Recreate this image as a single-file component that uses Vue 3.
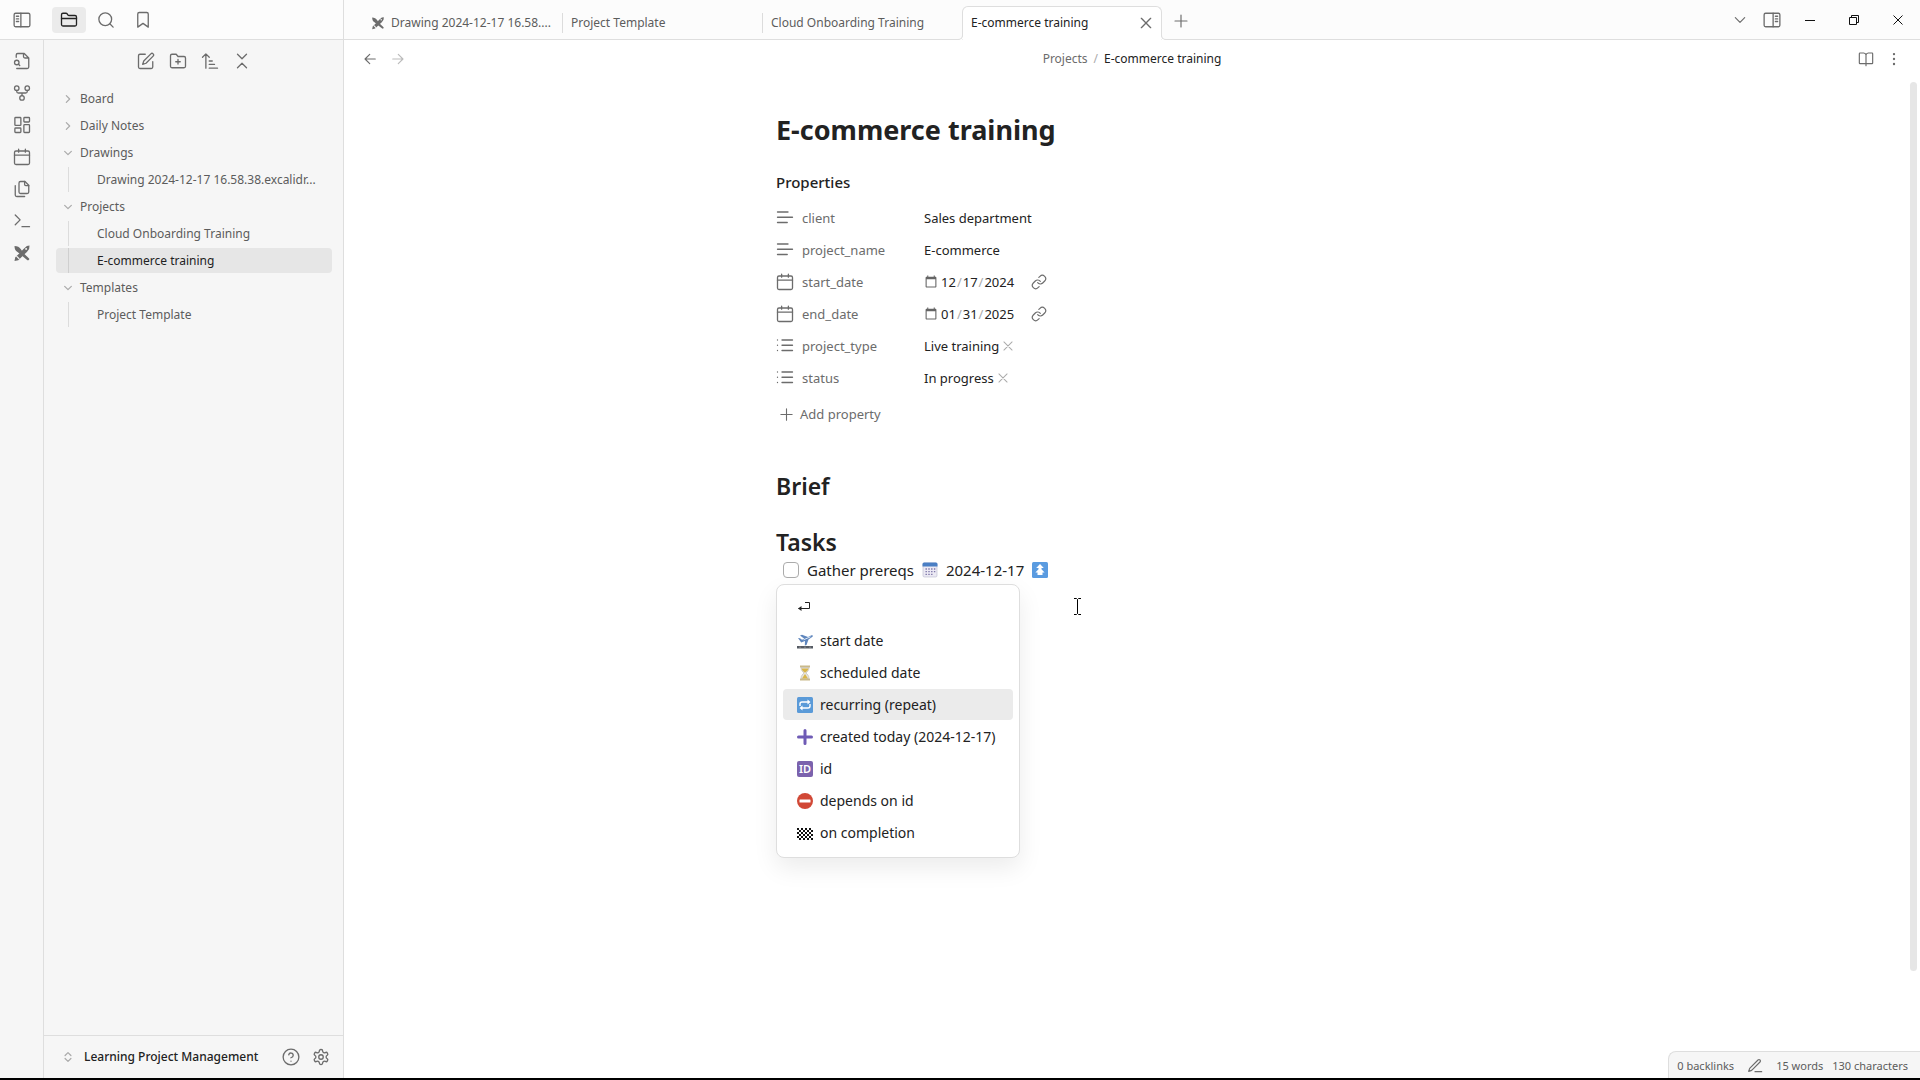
<script setup>
import { ref } from 'vue'

const icons = {
  panelLeft: '<rect x="1.5" y="3" width="21" height="18" rx="2"/><path d="M10.5 3v18M4.5 7h3M4.5 10.500h3M4.500 14h3"/>',
  panelRight: '<rect x="1.5" y="3" width="21" height="18" rx="2"/><path d="M13.5 3v18M16.500 7h3M16.500 10.500h3M16.500 14h3"/>',
  folder: '<path d="M20 20a2 2 0 0 0 2-2V8a2 2 0 0 0-2-2h-7.900a2 2 0 0 1-1.690-.9L9.600 3.900A2 2 0 0 0 7.930 3H4a2 2 0 0 0-2 2v13a2 2 0 0 0 2 2Z"/><path d="M2 10h20"/>',
  search: '<circle cx="11" cy="11" r="8.500"/><path d="m21.500 21.500-4.400-4.400"/>',
  bookmark: '<path d="m19 21.500-7-5-7 5V4a2 2 0 0 1 2-2h10a2 2 0 0 1 2 2z"/>',
  fileSearch: '<path d="M14 2v4a2 2 0 0 0 2 2h5M4.300 7V4a2 2 0 0 1 2-2H15l6 6v12a2 2 0 0 1-2 2H5"/><circle cx="5" cy="14" r="3"/><path d="m9 18-1.700-1.700"/>',
  graph: '<circle cx="12" cy="18.500" r="3"/><circle cx="5" cy="5.500" r="3"/><circle cx="19" cy="5.500" r="3"/><path d="M19 8.500v1.500a2 2 0 0 1-2 2H7a2 2 0 0 1-2-2V8.500M12 12v3.500"/>',
  dashboard: '<rect x="2.500" y="2" width="8" height="10.500" rx="1"/><rect x="14.500" y="2" width="7.500" height="6" rx="1"/><rect x="14.500" y="11.500" width="7.500" height="10.500" rx="1"/><rect x="2.500" y="16" width="8" height="6" rx="1"/>',
  calendar: '<rect x="2" y="4" width="20" height="18" rx="2"/><path d="M7.500 1.500v4M16.500 1.500v4M2 9.500h20"/>',
  copy: '<path d="M16 2H10a2 2 0 0 0-2 2v12a2 2 0 0 0 2 2h9a2 2 0 0 0 2-2V7z"/><path d="M15.500 2v4a1.500 1.500 0 0 0 1.500 1.500h4M3 7.500V20a2 2 0 0 0 2 2h10.500"/>',
  terminal: '<path d="m3 17 6.500-6.500L3 4M12 19.500h10"/>',
  excalidraw: '<g fill="currentColor" stroke="none"><path d="M2 2.500c4 .2 6.500 1.500 8.300 4.200l2 2.800-3.300 3.600-3-2.300C3.300 9 2 6.500 2 2.500z"/><path d="m14.800 13 6.700 6.200c.8 1.600-.8 3-2.300 2.300L12 15.800z"/><path d="M18.500 2.500 22 2l-.5 4.500-3 4.200-6 5.500-5.500 5.300L2 22.500l1-4.800L9 12l5-5.500z"/></g><path d="m5 16.500 3 3" stroke="#f6f6f6"/><circle cx="17.500" cy="6.500" r="1.300" fill="#f6f6f6" stroke="none"/>',
  edit: '<path d="M11 3H4a2 2 0 0 0-2 2v15a2 2 0 0 0 2 2h15a2 2 0 0 0 2-2v-7"/><path d="M18.500 2.500a2.100 2.100 0 0 1 3 3L12 15l-4.500 1.500L9 12z"/>',
  folderPlus: '<path d="M20 21a2 2 0 0 0 2-2V8a2 2 0 0 0-2-2h-8l-2.400-3H4a2 2 0 0 0-2 2v14a2 2 0 0 0 2 2ZM12 10v6M9 13h6"/>',
  sort: '<path d="m2 7 4.500-4.500L11 7M6.500 2.500V21.500M11 12h4M11 16.500h7M11 21.500h11"/>',
  collapse: '<path d="m6 21 6-6 6 6M6 3l6 6 6-6"/>',
  right: '<path d="m8 4 8 8-8 8"/>',
  down: '<path d="m4 8 8 8 8-8"/>',
  updown: '<path d="m5 15.500 7 7 7-7M5 8.500l7-7 7 7"/>',
  help: '<circle cx="12" cy="12" r="10.500"/><path d="M9 9a3 3 0 0 1 5.900 1c0 2-3 3-3 3M12 17.500h.010"/>',
  gear: '<path d="M12.220 2h-.44a2 2 0 0 0-2 2v.18a2 2 0 0 1-1 1.730l-.43.250a2 2 0 0 1-2 0l-.15-.08a2 2 0 0 0-2.730.730l-.22.380a2 2 0 0 0 .73 2.730l.15.1a2 2 0 0 1 1 1.720v.510a2 2 0 0 1-1 1.740l-.15.090a2 2 0 0 0-.73 2.730l.22.380a2 2 0 0 0 2.730.730l.15-.08a2 2 0 0 1 2 0l.43.250a2 2 0 0 1 1 1.730V20a2 2 0 0 0 2 2h.44a2 2 0 0 0 2-2v-.18a2 2 0 0 1 1-1.730l.43-.25a2 2 0 0 1 2 0l.15.080a2 2 0 0 0 2.730-.73l.22-.39a2 2 0 0 0-.73-2.730l-.15-.08a2 2 0 0 1-1-1.740v-.5a2 2 0 0 1 1-1.740l.15-.09a2 2 0 0 0 .73-2.730l-.22-.38a2 2 0 0 0-2.730-.73l-.15.080a2 2 0 0 1-2 0l-.43-.25a2 2 0 0 1-1-1.730V4a2 2 0 0 0-2-2z"/><circle cx="12" cy="12" r="3"/>',
  close: '<path d="M19 5 5 19M5 5l14 14"/>',
  plus: '<path d="M3 12h18M12 3v18"/>',
  arrowLeft: '<path d="M21 12H4M11.500 4 3.500 12l8 8"/>',
  arrowRight: '<path d="M3 12h17M12.500 4l8 8-8 8"/>',
  book: '<path d="M12 6v16M3 19a1 1 0 0 1-1-1V4a1 1 0 0 1 1-1h5.500A3.500 3.500 0 0 1 12 6a3.500 3.500 0 0 1 3.500-3H21a1 1 0 0 1 1 1v14a1 1 0 0 1-1 1z"/>',
  dots: '<g fill="currentColor"><circle cx="12" cy="3.500" r="1"/><circle cx="12" cy="12" r="1"/><circle cx="12" cy="20.500" r="1"/></g>',
  text: '<path d="M2 4h14M2 11h20M2 18h13"/>',
  list: '<path d="M8 4h14M8 11h14M8 18h14M2 4h.010M2 11h.010M2 18h.010"/>',
  link: '<path d="M10 13a5 5 0 0 0 7.540.540l3-3a5 5 0 0 0-7.070-7.070l-1.720 1.710"/><path d="M14 11a5 5 0 0 0-7.540-.54l-3 3a5 5 0 0 0 7.070 7.070l1.710-1.710"/>',
  pen: '<path d="M12 20.500h10"/><path d="M16.500 3a2.120 2.120 0 0 1 3 3L7 18.500l-4.500 1.500 1.500-4.500z"/>',
}

const emoji = {
  calendar: '<rect x="1" y="1" width="14" height="14" rx="1.500" fill="#eceaf4" stroke="#b9b9cf" stroke-width=".6"/><path d="M.5 4.500V2A1.500 1.500 0 0 1 2 .5h12A1.500 1.500 0 0 1 15.500 2v2.500z" fill="#4a7fc4"/><path d="M3.500 7h1.400M6.300 7h1.400M9.100 7h1.400M11.900 7h1.400M3.500 9.700h1.400M6.300 9.700h1.400M9.100 9.700h1.400M11.900 9.700h1.400M3.500 12.400h1.400M6.300 12.400h1.400M9.100 12.400h1.400" stroke="#7d76a8" stroke-width="1.300"/>',
  highest: '<rect width="16" height="16" rx="1.500" fill="#5a9be0"/><path d="m8 2 3.800 4H9.500v1.200L12.600 10.500H10.500V13h-5v-2.500H3.400L6.500 7.200V6H4.200z" fill="#fff"/>',
  plane: '<path d="M0 13h16v2.500H0z" fill="#555a63"/><path d="M2 14.200h2M7 14.200h2M12 14.200h2" stroke="#aaa" stroke-width=".6"/><path d="m1 5 2 .3 2 1.400 2.300-1L3 2.500l2-.7 6 2.300L14 2.500c1.500-.7 2.500 0 1.500 1.200L11.500 6.500 9.500 12l-1.700.5.200-4.500-3.800 1.400z" fill="#5f86bd"/><path d="m6.500 6.800 7-3" stroke="#dbe7f5"/>',
  hourglass: '<path d="M3 .5h10v2H3zM3 13.500h10v2H3z" fill="#c9b98a"/><path d="M4 2.500h8c0 3-1.500 4-3 5.500 1.500 1.500 3 2.500 3 5.500H4C4 10.500 5.500 9.500 7 8 5.500 6.500 4 5.500 4 2.500z" fill="#e6e3dc" stroke="#bdb9ae" stroke-width=".6"/><path d="M4.500 3.500h7C11 5.500 9.500 6.500 8 7.800 6.500 6.500 5 5.500 4.500 3.500zM8 9l3 4.500H5z" fill="#d9b64a"/>',
  repeat: '<rect width="16" height="16" rx="1.500" fill="#5a9ad8"/><path d="M3 9V7a2 2 0 0 1 2-2h6M13 7v2a2 2 0 0 1-2 2H5" fill="none" stroke="#fff" stroke-width="1.400"/><path d="m10.500 2.500 3 2.500-3 2.500zM5.500 8.500v5l-3-2.500z" fill="#fff"/>',
  plus: '<path d="M8 1.500v13M1.500 8h13" stroke="#6f5bb5" stroke-width="3" stroke-linecap="round"/>',
  stop: '<circle cx="8" cy="8" r="8" fill="#d14836"/><rect x="2.500" y="6.500" width="11" height="3" rx=".5" fill="#fff"/>',
  flag: '<path d="M0 3h16v11H0z" fill="#fff"/><path d="M0 4h16M0 8h16M0 12h16" stroke="#111" stroke-width="2" stroke-dasharray="2 2"/><path d="M2 6h14M2 10h14M2 14h14" stroke="#111" stroke-width="2" stroke-dasharray="2 2"/>',
}

const ribbon = [
  ['fileSearch', 'Open quick switcher'],
  ['graph', 'Open graph view'],
  ['dashboard', 'Create new canvas'],
  ['calendar', "Open today's daily note"],
  ['copy', 'Insert template'],
  ['terminal', 'Open command palette'],
  ['excalidraw', 'New drawing'],
]

const fileActions = [
  ['edit', 'New note'],
  ['folderPlus', 'New folder'],
  ['sort', 'Change sort order'],
  ['collapse', 'Collapse all'],
]

const tree = [
  { name: 'Board', open: false, files: [] },
  { name: 'Daily Notes', open: false, files: [] },
  { name: 'Drawings', open: true, files: ['Drawing 2024-12-17 16.58.38.excalidr...'] },
  { name: 'Projects', open: true, files: ['Cloud Onboarding Training', 'E-commerce training'] },
  { name: 'Templates', open: true, files: ['Project Template'] },
]

const current = ref('E-commerce training')

const tabs = [
  { title: 'Drawing 2024-12-17 16.58....', icon: 'excalidraw' },
  { title: 'Project Template' },
  { title: 'Cloud Onboarding Training' },
  { title: 'E-commerce training', active: true },
]

const properties = [
  { key: 'client', icon: 'text', kind: 'text', value: 'Sales department' },
  { key: 'project_name', icon: 'text', kind: 'text', value: 'E-commerce' },
  { key: 'start_date', icon: 'calendar', kind: 'date', value: '2024-12-17' },
  { key: 'end_date', icon: 'calendar', kind: 'date', value: '2025-01-31' },
  { key: 'project_type', icon: 'list', kind: 'list', value: 'Live training' },
  { key: 'status', icon: 'list', kind: 'list', value: 'In progress' },
]

const suggestions = [
  { label: '⏎', icon: null },
  { label: 'start date', icon: 'plane' },
  { label: 'scheduled date', icon: 'hourglass' },
  { label: 'recurring (repeat)', icon: 'repeat', selected: true },
  { label: 'created today (2024-12-17)', icon: 'plus' },
  { label: 'id', icon: 'id' },
  { label: 'depends on id', icon: 'stop' },
  { label: 'on completion', icon: 'flag' },
]
</script>

<template>
  <div class="app">
    <aside class="side">
      <header class="side-top">
        <button class="btn toggle" aria-label="Toggle left sidebar"><svg class="icon" viewBox="0 0 24 24" v-html="icons.panelLeft" /></button>
        <button class="btn tool on" aria-label="Files"><svg class="icon" viewBox="0 0 24 24" v-html="icons.folder" /></button>
        <button class="btn tool" aria-label="Search"><svg class="icon" viewBox="0 0 24 24" v-html="icons.search" /></button>
        <button class="btn tool" aria-label="Bookmarks"><svg class="icon" viewBox="0 0 24 24" v-html="icons.bookmark" /></button>
      </header>
      <div class="side-body">
        <nav class="ribbon" aria-label="Ribbon">
          <button v-for="[icon, label] in ribbon" :key="icon" class="btn" :aria-label="label">
            <svg class="icon" viewBox="0 0 24 24" v-html="icons[icon]" />
          </button>
        </nav>
        <div class="explorer">
          <div class="file-actions">
            <button v-for="[icon, label] in fileActions" :key="icon" class="btn" :aria-label="label">
              <svg class="icon" viewBox="0 0 24 24" v-html="icons[icon]" />
            </button>
          </div>
          <nav class="tree" aria-label="Files">
            <div v-for="folder in tree" :key="folder.name" class="folder">
              <button class="row folder-row" :aria-expanded="folder.open">
                <svg class="icon chevron" viewBox="0 0 24 24" v-html="folder.open ? icons.down : icons.right" />
                <span>{{ folder.name }}</span>
              </button>
              <a
                v-for="file in folder.files"
                :key="file"
                href="#"
                class="row file-row"
                :class="{ current: file === current }"
                @click.prevent="current = file"
              ><span class="name">{{ file }}</span></a>
            </div>
          </nav>
          <footer class="vault">
            <button class="vault-name">
              <svg class="icon chevron" viewBox="0 0 24 24" v-html="icons.updown" />
              <span>Learning Project Management</span>
            </button>
            <button class="btn vault-btn" aria-label="Help"><svg class="icon" viewBox="0 0 24 24" v-html="icons.help" /></button>
            <button class="btn vault-btn" aria-label="Settings"><svg class="icon" viewBox="0 0 24 24" v-html="icons.gear" /></button>
          </footer>
        </div>
      </div>
    </aside>

    <main class="main">
      <header class="tabbar">
        <div class="tabs">
          <div v-for="tab in tabs" :key="tab.title" class="tab" :class="{ active: tab.active }">
            <svg v-if="tab.icon" class="icon tab-icon" viewBox="0 0 24 24" v-html="icons[tab.icon]" />
            <span class="name">{{ tab.title }}</span>
            <button v-if="tab.active" class="btn tab-close" aria-label="Close tab"><svg class="icon" viewBox="0 0 24 24" v-html="icons.close" /></button>
          </div>
        </div>
        <button class="btn new-tab" aria-label="New tab"><svg class="icon" viewBox="0 0 24 24" v-html="icons.plus" /></button>
        <span class="grow" />
        <button class="btn tab-list" aria-label="Tab list"><svg class="icon small" viewBox="0 0 24 24" v-html="icons.down" /></button>
        <button class="btn tab-list" aria-label="Toggle right sidebar"><svg class="icon" viewBox="0 0 24 24" v-html="icons.panelRight" /></button>
        <div class="window-buttons">
          <button class="btn" aria-label="Minimize"><svg class="win" viewBox="0 0 12 12"><path d="M1 6.500h10" /></svg></button>
          <button class="btn" aria-label="Restore"><svg class="win" viewBox="0 0 12 12"><path d="M1.500 3.500h7v7h-7zM3.500 3.500v-2h7v7h-2" /></svg></button>
          <button class="btn" aria-label="Close"><svg class="win" viewBox="0 0 12 12"><path d="m1.500 1.500 9 9M10.500 1.500l-9 9" /></svg></button>
        </div>
      </header>

      <div class="view-header">
        <div class="history">
          <button class="btn" aria-label="Back"><svg class="icon small" viewBox="0 0 24 24" v-html="icons.arrowLeft" /></button>
          <button class="btn" aria-label="Forward" disabled><svg class="icon small" viewBox="0 0 24 24" v-html="icons.arrowRight" /></button>
        </div>
        <div class="crumbs">
          <a href="#">Projects</a><span class="slash">/</span><span class="here">E-commerce training</span>
        </div>
        <div class="view-actions">
          <button class="btn" aria-label="Reading view"><svg class="icon" viewBox="0 0 24 24" v-html="icons.book" /></button>
          <button class="btn" aria-label="More options"><svg class="icon small" viewBox="0 0 24 24" v-html="icons.dots" /></button>
        </div>
      </div>

      <div class="scroller">
        <article class="note">
          <h1>E-commerce training</h1>
          <h2 class="props-title">Properties</h2>
          <div class="props">
            <div v-for="p in properties" :key="p.key" class="prop">
              <label class="prop-key" :for="p.key">
                <svg class="icon" viewBox="0 0 24 24" v-html="icons[p.icon]" />
                <span>{{ p.key }}</span>
              </label>
              <div class="prop-value">
                <input v-if="p.kind === 'text'" :id="p.key" v-model="p.value" type="text" class="value-text">
                <template v-else-if="p.kind === 'date'">
                  <input :id="p.key" v-model="p.value" type="date" class="value-date">
                  <a href="#" class="date-link" :aria-label="'Open daily note for ' + p.key"><svg class="icon" viewBox="0 0 24 24" v-html="icons.link" /></a>
                </template>
                <template v-else>
                  <span>{{ p.value }}</span>
                  <button :id="p.key" class="btn remove" :aria-label="'Remove ' + p.value"><svg class="icon" viewBox="0 0 24 24" v-html="icons.close" /></button>
                </template>
              </div>
            </div>
          </div>
          <button class="add">
            <svg class="icon" viewBox="0 0 24 24" v-html="icons.plus" />
            <span>Add property</span>
          </button>

          <h2>Brief</h2>
          <h2 class="tasks-title">Tasks</h2>
          <div class="task-line">
            <label class="task">
              <input type="checkbox" class="check">
              <span>Gather prereqs</span>
              <svg class="emoji" viewBox="0 0 16 16" v-html="emoji.calendar" />
              <span>2024-12-17</span>
              <svg class="emoji" viewBox="0 0 16 16" v-html="emoji.highest" />
            </label>
            <div class="popup" role="listbox" aria-label="Task suggestions">
              <button v-for="s in suggestions" :key="s.label" class="option" :class="{ selected: s.selected }" role="option" :aria-selected="!!s.selected">
                <svg v-if="!s.icon" class="return" viewBox="0 0 14 12"><path d="M8 1.500h4.500V7.500H1.500" /><path d="M4.500 5v5L1 7.500z" fill="#222" stroke="none" /></svg>
                <template v-else>
                  <span v-if="s.icon === 'id'" class="id-badge" aria-hidden="true">ID</span>
                  <svg v-else class="emoji" viewBox="0 0 16 16" v-html="emoji[s.icon]" />
                  <span>{{ s.label }}</span>
                </template>
              </button>
            </div>
            <svg class="ibeam" viewBox="0 0 9 17"><path d="M1 .5h2.500l1 1 1-1H8M4.500 1.500v14M1 16.500h2.500l1-1 1 1H8" /></svg>
          </div>
        </article>
        <div class="scrollbar" />
      </div>

      <footer class="status">
        <span>0 backlinks</span>
        <button class="btn status-pen" aria-label="Editing mode"><svg class="icon" viewBox="0 0 24 24" v-html="icons.pen" /></button>
        <span class="words">15 words</span>
        <span>130 characters</span>
      </footer>
    </main>
  </div>
</template>

<style>
body {
  margin: 0;
  background: #fff;
}
</style>

<style scoped>
.app {
  display: flex;
  box-sizing: border-box;
  min-height: 100vh;
  border-bottom: 2px solid #000;
  background: #fff;
  color: #222;
  font: 12px/20px "Noto Sans", "Open Sans", sans-serif;
}
.app *,
.app *::before,
.app *::after {
  box-sizing: border-box;
}
button,
input {
  margin: 0;
  padding: 0;
  border: 0;
  background: none;
  color: inherit;
  font: inherit;
}
a {
  color: inherit;
  text-decoration: none;
}
.btn {
  display: flex;
  align-items: center;
  justify-content: center;
  flex: none;
  color: #6c6c6c;
}
.icon {
  flex: none;
  width: 18px;
  height: 18px;
  fill: none;
  stroke: currentColor;
  stroke-width: 1.75;
  stroke-linecap: round;
  stroke-linejoin: round;
}
.icon.small {
  width: 14px;
  height: 14px;
  stroke-width: 2;
}
.name {
  white-space: nowrap;
}
.grow {
  flex: 1;
}

/* left side */
.side {
  display: flex;
  flex-direction: column;
  flex: none;
  width: 344px;
  border-right: 1px solid #dedede;
  background: #f6f6f6;
}
.side-top {
  display: flex;
  align-items: center;
  height: 40px;
  border-bottom: 1px solid #dedede;
  background: #fcfcfc;
}
.toggle {
  width: 44px;
  height: 26px;
  margin-right: 8px;
}
.tool {
  width: 34px;
  height: 26px;
  margin-right: 3px;
  border-radius: 4px;
}
.tool.on {
  background: #ebebeb;
  color: #222;
}
.side-body {
  display: flex;
  flex: 1;
}
.ribbon {
  display: flex;
  flex-direction: column;
  align-items: center;
  gap: 6px;
  width: 44px;
  padding-top: 8px;
  border-right: 1px solid #dedede;
}
.ribbon .btn {
  width: 26px;
  height: 26px;
}
.explorer {
  display: flex;
  flex-direction: column;
  flex: 1;
  min-width: 0;
}
.file-actions {
  display: flex;
  justify-content: center;
  gap: 6px;
  padding: 8px 0 12px;
}
.file-actions .btn {
  width: 26px;
  height: 26px;
}
.tree {
  flex: 1;
  padding: 0 11px 0 12px;
}
.row {
  display: flex;
  align-items: center;
  width: 100%;
  height: 25px;
  margin-bottom: 2px;
  color: #5c5c5c;
  text-align: left;
}
.folder-row {
  gap: 7px;
  padding-left: 7px;
}
.chevron {
  width: 10px;
  height: 10px;
  stroke-width: 3;
  color: #ababab;
}
.file-row {
  border-radius: 4px;
}
.file-row::before {
  content: "";
  flex: none;
  width: 1px;
  height: 25px;
  margin: 0 28px 0 12px;
  background: #dcdcdc;
}
.file-row.current {
  background: #e6e6e6;
  color: #222;
}
.file-row.current::before {
  background: #cfcfcf;
}
.vault {
  display: flex;
  align-items: center;
  height: 43px;
  padding: 0 9px 0 19px;
  border-top: 1px solid #dedede;
}
.vault-name {
  display: flex;
  align-items: center;
  flex: 1;
  gap: 11px;
  font-weight: 500;
  white-space: nowrap;
}
.vault-name .chevron {
  height: 12px;
}
.vault-btn {
  width: 26px;
  height: 26px;
  margin-left: 4px;
}

/* tabs */
.main {
  display: flex;
  flex-direction: column;
  flex: 1;
  min-width: 0;
}
.tabbar {
  display: flex;
  height: 40px;
  padding-left: 18px;
  border-bottom: 1px solid #dedede;
  background: #fcfcfc;
}
.tabs {
  display: flex;
  align-items: flex-end;
}
.tab {
  display: flex;
  align-items: center;
  width: 200px;
  height: 34px;
  padding: 1px 7px 0 9px;
  color: #5c5c5c;
}
.tab:not(.active)::after {
  content: "";
  flex: none;
  width: 1px;
  height: 20px;
  margin: 0 -8px 0 auto;
  background: #dcdcdc;
}
.tab:nth-last-child(2)::after {
  visibility: hidden;
}
.tab.active {
  position: relative;
  margin-bottom: -1px;
  padding: 0 5px 2px 8px;
  border: 1px solid #dedede;
  border-bottom: 0;
  border-radius: 6px 6px 0 0;
  background: #fff;
  color: #222;
}
.tab.active::before,
.tab.active::after {
  content: "";
  position: absolute;
  bottom: 0;
  width: 5px;
  height: 5px;
  border: 0 solid #dedede;
}
.tab.active::before {
  left: -5px;
  border-width: 0 1px 1px 0;
  border-radius: 0 0 5px 0;
  box-shadow: 1px 1px 0 #fff;
}
.tab.active::after {
  right: -5px;
  border-width: 0 0 1px 1px;
  border-radius: 0 0 0 5px;
  box-shadow: -1px 1px 0 #fff;
}
.tab-icon {
  width: 14px;
  height: 14px;
  margin-right: 6px;
  color: #6c6c6c;
}
.tab-close {
  width: 20px;
  height: 20px;
  margin-left: auto;
}
.tab-close .icon {
  width: 16px;
  height: 16px;
  stroke-width: 2;
}
.new-tab {
  width: 26px;
  margin: 2px 0 0 6px;
}
.new-tab .icon {
  width: 16px;
  height: 16px;
}
.tab-list {
  width: 32px;
}
.window-buttons {
  display: flex;
}
.window-buttons .btn {
  width: 44px;
}
.win {
  width: 12px;
  height: 12px;
  fill: none;
  stroke: #111;
}

/* view header */
.view-header {
  display: flex;
  align-items: center;
  height: 38px;
  padding: 0 12px;
}
.history,
.view-actions {
  display: flex;
  flex: 1;
}
.history .btn,
.view-actions .btn {
  width: 28px;
  height: 26px;
}
.history .btn:disabled {
  color: #bbb;
}
.view-actions {
  justify-content: flex-end;
}
.view-actions .icon:not(.small) {
  width: 16px;
  height: 16px;
}
.crumbs {
  display: flex;
  color: #6c6c6c;
}
.slash {
  margin: 0 6px;
  color: #ababab;
}
.here {
  color: #222;
}

/* note */
.scroller {
  display: flex;
  flex: 1;
  padding: 4px 3px 80px 0;
}
.scrollbar {
  flex: none;
  width: 7px;
  border-radius: 4px;
  background: #e6e6e6;
}
.note {
  width: 702px;
  margin: 0 auto;
  padding-top: 26px;
}
h1,
h2 {
  margin: 0;
  color: #222;
}
h1 {
  font-size: 27px;
  line-height: 44px;
  font-weight: 700;
}
h2 {
  margin-top: 44px;
  font-size: 23px;
  line-height: 32px;
  font-weight: 600;
}
h2.props-title {
  margin: 20px 0 10px;
  font-size: 15px;
  line-height: 20px;
  font-weight: 500;
}
h2.tasks-title {
  margin-top: 24px;
}
.prop {
  display: flex;
  align-items: center;
  height: 32px;
  font-size: 13px;
}
.prop-key {
  display: flex;
  align-items: center;
  gap: 8px;
  width: 148px;
  color: #6c6c6c;
}
.prop-value {
  display: flex;
  align-items: center;
}
.value-text {
  width: 240px;
}
.value-date {
  display: inline-flex;
  width: 98px;
  height: 20px;
}
.value-date::-webkit-calendar-picker-indicator {
  order: -1;
  width: 14px;
  height: 14px;
  margin: 0 3px 0 0;
  padding: 0;
  opacity: 0.6;
}
.value-date::-webkit-datetime-edit {
  padding: 0;
}
.value-date::-webkit-datetime-edit-fields-wrapper {
  padding: 0;
}
.value-date::-webkit-datetime-edit-text {
  padding: 0 1px;
  color: #ababab;
}
.value-date::-webkit-datetime-edit-month-field,
.value-date::-webkit-datetime-edit-day-field,
.value-date::-webkit-datetime-edit-year-field {
  padding: 0;
}
.date-link {
  display: flex;
  margin-left: 9px;
  color: #6c6c6c;
}
.date-link .icon {
  width: 16px;
  height: 16px;
}
.remove {
  margin-left: 2px;
  color: #ababab;
}
.remove .icon {
  width: 14px;
  height: 14px;
}
.add {
  display: flex;
  align-items: center;
  gap: 6px;
  margin-top: 8px;
  padding-left: 3px;
  height: 24px;
  color: #6c6c6c;
  font-size: 13px;
}
.add .icon {
  width: 15px;
  height: 15px;
}
.task-line {
  position: relative;
}
.task {
  display: flex;
  align-items: center;
  gap: 8px;
  height: 24px;
  padding-left: 7px;
  font-size: 15px;
}
.check {
  appearance: none;
  width: 16px;
  height: 16px;
  border: 1px solid #ababab;
  border-radius: 4px;
  background: #fff;
}
.emoji {
  flex: none;
  width: 16px;
  height: 16px;
}
.popup {
  position: absolute;
  top: 26px;
  left: 0;
  display: flex;
  flex-direction: column;
  gap: 1px;
  width: 244px;
  padding: 8px 6px 9px;
  border: 1px solid #dedede;
  border-radius: 8px;
  background: #fff;
  box-shadow: 0 10px 24px rgba(0, 0, 0, 0.08);
}
.option {
  display: flex;
  align-items: center;
  gap: 7px;
  height: 31px;
  padding-left: 14px;
  border-radius: 4px;
  font-size: 14px;
  white-space: nowrap;
}
.option.selected {
  background: #ebebeb;
}
.id-badge {
  width: 16px;
  height: 16px;
  border-radius: 2px;
  background: #7b62ad;
  color: #fff;
  font-size: 11px;
  font-weight: 600;
  line-height: 16px;
  text-align: center;
}
.return {
  width: 14px;
  height: 12px;
  margin-bottom: 4px;
  fill: none;
  stroke: #222;
}
.ibeam {
  position: absolute;
  top: 40px;
  left: 297px;
  width: 9px;
  height: 17px;
  fill: none;
  stroke: #000;
}

/* status bar */
.status {
  display: flex;
  align-items: center;
  align-self: flex-end;
  height: 27px;
  padding: 1px 12px 0 8px;
  border: 1px solid #dedede;
  border-width: 1px 0 0 1px;
  border-radius: 8px 0 0 0;
  background: #f6f6f6;
  color: #5c5c5c;
  font-size: 11px;
}
.status-pen {
  margin: 0 13px;
}
.status-pen .icon {
  width: 16px;
  height: 16px;
}
.words {
  margin-right: 9px;
}
</style>
